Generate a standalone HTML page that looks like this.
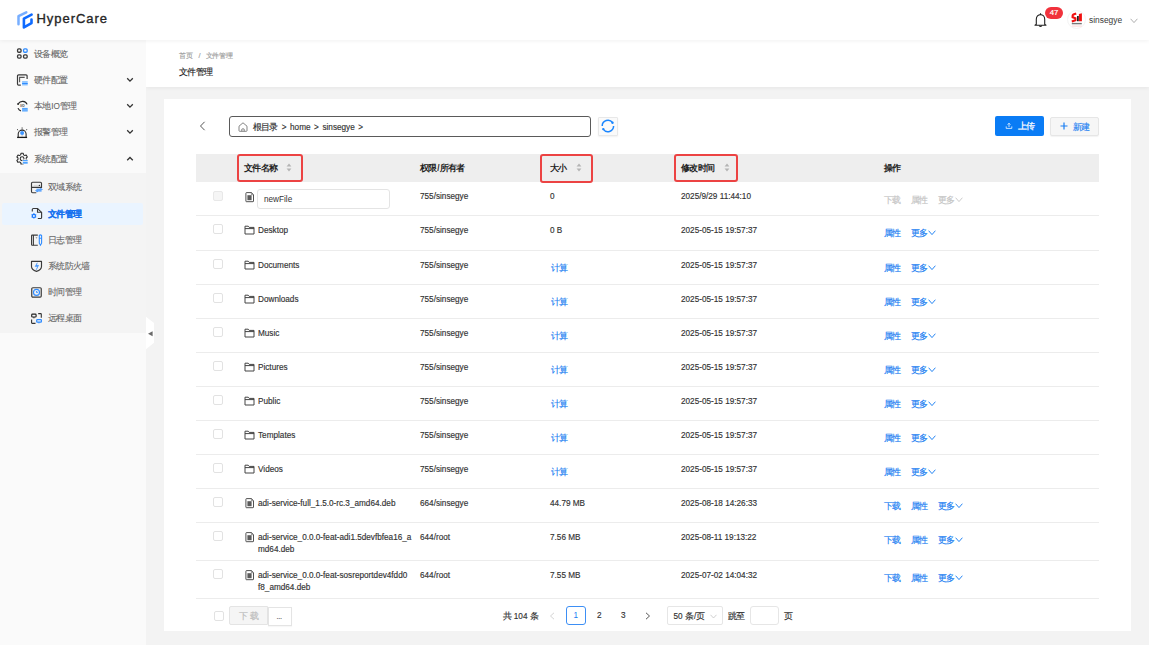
<!DOCTYPE html>
<html><head><meta charset="utf-8">
<style>
*{box-sizing:border-box;margin:0;padding:0}
html,body{width:1149px;height:645px;overflow:hidden;background:#f3f3f3;font-family:"Liberation Sans",sans-serif;color:#333}
.abs{position:absolute}
svg{display:block}
#header{position:absolute;left:0;top:0;width:1149px;height:39.5px;background:#fff;box-shadow:0 1px 4px rgba(0,0,0,.06);z-index:5}
#sidebar{position:absolute;left:0;top:40px;width:146px;height:605px;background:#fafafa;z-index:2}
#sub{position:absolute;left:0;top:133px;width:146px;height:160px;background:#f4f4f4}
#crumb{position:absolute;left:146px;top:40px;width:1003px;height:47px;background:#fff;box-shadow:0 1px 4px rgba(0,0,0,.06)}
#card{position:absolute;left:164px;top:99px;width:967px;height:532px;background:#fff}
.t{position:absolute;white-space:nowrap;font-size:8.2px;line-height:10px;color:#333;-webkit-text-stroke:0.15px currentColor}
.mi{position:absolute;left:0;width:146px;height:24px}
.mi .tx{position:absolute;left:34px;top:7px;font-size:8.2px;line-height:10px;color:#666;white-space:nowrap;-webkit-text-stroke:0.1px currentColor}
.mi .ico{position:absolute;left:14px;top:2px}
.sm .tx{left:48px}
.sm .ico{left:28px}
.chev{position:absolute;left:126px;top:9px}
.row{position:absolute;left:196px;width:903px;border-bottom:1px solid #ececec}
.cb{position:absolute;left:17px;width:10px;height:10px;border:1px solid #e2e2e2;border-radius:2px;background:#fff}
.op{color:#1a7ef2}
.dis{color:#c4c4c4}
.ops span{display:inline-block;margin-right:9.6px}
.ops span:last-child{margin-right:0}
.ops svg{display:inline-block}
.inp{position:absolute;left:61px;top:7px;width:132.5px;height:20px;border:1px solid #e4e4e4;border-radius:3px;background:#fff}
.inp span{position:absolute;left:6px;top:5px;font-size:8.2px;line-height:10px;color:#333}
.th{position:absolute;left:196px;top:154px;width:903px;height:28px;background:#eeeeee}
.th .t{font-weight:bold;top:9px;color:#222;-webkit-text-stroke:0}
.redbox{position:absolute;border:2px solid #ec4343;border-radius:3px}
.sort{position:absolute;top:9px}
.pg{position:absolute;top:606px;height:19px;border:1px solid #e6e6e6;border-radius:2px;background:#fff}
.c{font-style:normal;font-size:8.6px;letter-spacing:-0.7px;margin-right:0.7px}
.c7 .c{font-size:7.2px;letter-spacing:-0.3px;margin-right:0.3px}
</style></head><body>
<div id="header">
  <svg class="abs" style="left:14px;top:8px" width="24" height="24" viewBox="0 0 24 24">
    <path d="M4.5 16.2V8.2L12.3 4.3" fill="none" stroke="#77aeff" stroke-width="2.5" stroke-linejoin="round" stroke-linecap="round"/>
    <path d="M17.6 6.6L9.9 10.6V19.4L17.5 15.1V11.6" fill="none" stroke="#0f6bff" stroke-width="2.6" stroke-linejoin="round" stroke-linecap="round"/>
  </svg>
  <div class="t" style="left:36.5px;top:11px;font-size:13px;line-height:16px;color:#262626;letter-spacing:0.95px;-webkit-text-stroke:0.35px #262626">HyperCare</div>
  <!-- bell -->
  <svg class="abs" style="left:1034px;top:12px" width="13" height="16" viewBox="0 0 13 16">
    <path d="M6.5 1.2V2.3M2.3 12.3V7.2C2.3 4.6 4.1 2.6 6.5 2.6S10.7 4.6 10.7 7.2V12.3L12 13.2H1L2.3 12.3Z" fill="none" stroke="#222" stroke-width="1.1" stroke-linejoin="round"/>
    <path d="M5.2 13.6Q6.5 15.4 7.8 13.6" fill="none" stroke="#222" stroke-width="1.1"/>
  </svg>
  <div class="abs" style="left:1045px;top:6.5px;width:18px;height:12px;border-radius:6px;background:#f1323c;color:#fff;font-size:7.8px;line-height:12px;text-align:center;-webkit-text-stroke:0.2px #fff">47</div>
  <!-- avatar -->
  <div class="abs" style="left:1067px;top:10px;width:19px;height:19px;border-radius:50%;background:#fff;border:1px solid #f4f4f4"></div>
  <svg class="abs" style="left:1064px;top:8px" width="26" height="24" viewBox="0 0 26 24">
    <path d="M12.2 5.4L9.4 6.5Q8.6 6.9 8.6 7.8V9.2L11.4 10.2V12.3L7.8 13.6" fill="none" stroke="#f01010" stroke-width="2.1"/>
    <rect x="13" y="8" width="1.8" height="5.2" fill="#222"/>
    <path d="M14.9 6.1L17.9 5.2V13.2H14.9Z" fill="#f01010"/>
    <rect x="7.8" y="14.9" width="10" height="1.4" fill="#777"/>
    <rect x="7.8" y="17.6" width="10" height="0.9" fill="#fbd0d0"/>
  </svg>
  <div class="t" style="left:1089px;top:15px;font-size:8.4px;color:#3a3a3a;-webkit-text-stroke:0">sinsegye</div>
  <svg class="abs" style="left:1130px;top:18px" width="8" height="6" viewBox="0 0 8 6"><path d="M0.6 0.8L4 4.6L7.4 0.8" fill="none" stroke="#999" stroke-width="0.8"/></svg>
</div>

<div id="sidebar">
  <div id="sub"></div>
  <div class="abs" style="left:2px;top:163px;width:141px;height:22px;background:#eaf4ff;border-radius:2px"></div>
  <div class="mi" style="top:2px">
    <svg class="ico" width="18" height="18" viewBox="0 0 18 18">
      <rect x="3.55" y="4.85" width="3.5" height="3.4" rx="1.1" fill="none" stroke="#3a3a3a" stroke-width="1.3"/>
      <rect x="9.55" y="4.85" width="3.6" height="3.4" rx="1.1" fill="none" stroke="#2f8cff" stroke-width="1.3"/>
      <rect x="3.55" y="10.85" width="3.5" height="3.3" rx="1.1" fill="none" stroke="#3a3a3a" stroke-width="1.3"/>
      <rect x="9.55" y="10.85" width="3.6" height="3.3" rx="1.1" fill="none" stroke="#3a3a3a" stroke-width="1.3"/>
    </svg>
    <span class="tx"><i class="c">设备概览</i></span></div>
  <div class="mi" style="top:28px">
    <svg class="ico" width="18" height="18" viewBox="0 0 18 18">
      <path d="M13.1 8.9V5.9Q13.1 4.8 12 4.8H4.6Q3.5 4.8 3.5 5.9V14.1Q3.5 15.2 4.6 15.2H6.8" fill="none" stroke="#3a3a3a" stroke-width="1.2"/>
      <path d="M5.6 12.3V7.4H10.7" fill="none" stroke="#555" stroke-width="1.1"/>
      <rect x="8.1" y="11" width="5.6" height="4.5" fill="#93c7ff"/><rect x="8.1" y="13" width="5.6" height="1.1" fill="#2f8cff"/>
    </svg>
    <span class="tx"><i class="c">硬件配置</i></span><svg class="chev" width="8" height="6" viewBox="0 0 8 6"><path d="M1.2 1.3L4 4.1L6.8 1.3" fill="none" stroke="#333" stroke-width="1.3"/></svg></div>
  <div class="mi" style="top:54px">
    <svg class="ico" style="top:3px" width="18" height="18" viewBox="0 0 18 18">
      <path d="M4.4 6.6A4.9 4.9 0 0 1 13.1 7.4" fill="none" stroke="#2a2a2a" stroke-width="1.15"/>
      <path d="M4 11.1A4.9 4.9 0 0 0 6.9 13.9" fill="none" stroke="#2a2a2a" stroke-width="1.15"/>
      <circle cx="4.1" cy="7" r="0.95" fill="#222"/>
      <text x="6.2" y="9.9" font-size="3.4" font-weight="bold" font-family="Liberation Sans" fill="#333">I/O</text>
      <rect x="8.1" y="10.9" width="5.6" height="3.6" fill="#4fa3ff"/><rect x="8.1" y="12.7" width="5.6" height="0.6" fill="#a9d2ff"/>
    </svg>
    <span class="tx"><i class="c">本地</i>IO<i class="c">管理</i></span><svg class="chev" width="8" height="6" viewBox="0 0 8 6"><path d="M1.2 1.3L4 4.1L6.8 1.3" fill="none" stroke="#333" stroke-width="1.3"/></svg></div>
  <div class="mi" style="top:80px">
    <svg class="ico" style="top:3px" width="18" height="18" viewBox="0 0 18 18">
      <path d="M8.1 4.2V6.7" stroke="#777" stroke-width="1"/>
      <path d="M3.3 6.1L3.9 7.3M12.9 6.1L12.3 7.3" stroke="#444" stroke-width="0.9"/>
      <path d="M4.2 14.2V11.1A3.95 3.95 0 0 1 12.1 11.1V14.2" fill="none" stroke="#2a2a2a" stroke-width="1.1"/>
      <path d="M3.1 14.4H13.1" stroke="#1a1a1a" stroke-width="1.3"/>
      <circle cx="8.1" cy="10" r="2" fill="#3e95ff"/><path d="M8.1 12V14" stroke="#999" stroke-width="0.6"/>
    </svg>
    <span class="tx"><i class="c">报警管理</i></span><svg class="chev" width="8" height="6" viewBox="0 0 8 6"><path d="M1.2 1.3L4 4.1L6.8 1.3" fill="none" stroke="#333" stroke-width="1.3"/></svg></div>
  <div class="mi" style="top:107px">
    <svg class="ico" style="top:3px" width="18" height="18" viewBox="0 0 18 18">
      <path d="M6.05 5.15 L6.73 4.73 L6.96 3.32 L9.24 3.32 L9.47 4.73 L10.15 5.15 L10.86 5.53 L12.19 5.02 L13.33 7.00 L12.22 7.90 L12.20 8.70 L12.22 9.50 L13.33 10.40 L12.19 12.38 L10.86 11.87 L10.15 12.25 L9.47 12.67 L9.24 14.08 L6.96 14.08 L6.73 12.67 L6.05 12.25 L5.34 11.87 L4.01 12.38 L2.87 10.40 L3.98 9.50 L4.00 8.70 L3.98 7.90 L2.87 7.00 L4.01 5.02 L5.34 5.53Z" fill="none" stroke="#2a2a2a" stroke-width="1.05" stroke-linejoin="round"/>
      <circle cx="8.1" cy="8.7" r="1.9" fill="none" stroke="#2a2a2a" stroke-width="1.05"/>
      <rect x="8.4" y="9.4" width="5.8" height="5" fill="#fafafa"/>
      <rect x="8.9" y="10" width="4.8" height="1.3" fill="#4fa3ff"/><rect x="8.9" y="12" width="4.8" height="1.7" fill="#4fa3ff"/>
    </svg>
    <span class="tx"><i class="c">系统配置</i></span><svg class="chev" width="8" height="6" viewBox="0 0 8 6"><path d="M1.2 4.3L4 1.5L6.8 4.3" fill="none" stroke="#333" stroke-width="1.3"/></svg></div>
  <div class="mi sm" style="top:135px">
    <svg class="ico" style="top:3px" width="18" height="18" viewBox="0 0 18 18">
      <path d="M8.3 14.7H4.6Q3.5 14.7 3.5 13.6V5.3Q3.5 4.2 4.6 4.2H12.4Q13.5 4.2 13.5 5.3V9.35H3.5" fill="none" stroke="#3a3a3a" stroke-width="1.15"/>
      <path d="M5.6 7.4H10.8" stroke="#ccc" stroke-width="0.7"/><circle cx="11.4" cy="7.4" r="0.7" fill="#333"/>
      <path d="M8.4 11.3H13.6L12.4 10.3M13.6 12.9H8.4L9.6 13.9" fill="none" stroke="#2f8cff" stroke-width="1.1"/>
    </svg>
    <span class="tx"><i class="c">双域系统</i></span></div>
  <div class="mi sm" style="top:162px">
    <svg class="ico" style="top:2px" width="18" height="18" viewBox="0 0 18 18">
      <path d="M4.3 7.5V5.6Q4.3 4.5 5.4 4.5H9.6L13.6 8.4V13.4Q13.6 14.5 12.5 14.5H9.8" fill="none" stroke="#3a3a3a" stroke-width="1.15"/>
      <path d="M9.5 4.6V8.2H13.5" fill="none" stroke="#3a3a3a" stroke-width="1.1"/>
      <circle cx="5.9" cy="11.9" r="1.6" fill="none" stroke="#1677ff" stroke-width="1.2"/>
      <path d="M5.9 9.2V9.9M5.9 13.9V14.6M3.6 10.55L4.2 10.9M7.6 12.9L8.2 13.25M3.6 13.25L4.2 12.9M7.6 10.9L8.2 10.55" stroke="#1677ff" stroke-width="1.1"/>
    </svg>
    <span class="tx" style="color:#1570ef;font-weight:bold"><i class="c">文件管理</i></span></div>
  <div class="mi sm" style="top:188px">
    <svg class="ico" style="top:3px" width="18" height="18" viewBox="0 0 18 18">
      <path d="M9.8 4.1H4.2Q3.6 4.1 3.6 4.7V13.6Q3.6 14.2 4.2 14.2H9.8" fill="none" stroke="#3a3a3a" stroke-width="1.15"/>
      <path d="M5.4 4.1V14.2" stroke="#333" stroke-width="1"/><path d="M7.8 6.4L8.5 6.8L9.2 6.4" stroke="#444" stroke-width="0.7" fill="none"/>
      <path d="M11.3 4.5Q12.4 3.4 13.6 4.5V12.2L12.45 14.2L11.3 12.2Z M11.3 7.3H13.6" fill="none" stroke="#2f8cff" stroke-width="1.1"/>
    </svg>
    <span class="tx"><i class="c">日志管理</i></span></div>
  <div class="mi sm" style="top:214px">
    <svg class="ico" style="top:3px" width="18" height="18" viewBox="0 0 18 18">
      <path d="M3.5 4.4H13.5V9.5Q13.5 12.8 8.5 14.4Q3.5 12.8 3.5 9.5Z" fill="none" stroke="#3a3a3a" stroke-width="1.15" stroke-linejoin="round"/>
      <path d="M9.3 5.8L7.1 9.6H9.6L8.2 12.9L10.7 8.3H8.3Z" fill="#2f8cff" stroke="#2f8cff" stroke-width="0.4" stroke-linejoin="round"/>
    </svg>
    <span class="tx"><i class="c">系统防火墙</i></span></div>
  <div class="mi sm" style="top:240px">
    <svg class="ico" style="top:3px" width="18" height="18" viewBox="0 0 18 18">
      <rect x="3.75" y="4.75" width="9.5" height="9.3" rx="1.1" fill="none" stroke="#3a3a3a" stroke-width="1.2"/>
      <circle cx="8.5" cy="9.4" r="3" fill="none" stroke="#2f8cff" stroke-width="1.1"/>
      <path d="M8.4 8V9.6H9.8Z" fill="#2f8cff" stroke="#2f8cff" stroke-width="0.6"/>
    </svg>
    <span class="tx"><i class="c">时间管理</i></span></div>
  <div class="mi sm" style="top:266px">
    <svg class="ico" style="top:3px" width="18" height="18" viewBox="0 0 18 18">
      <rect x="3.7" y="5.1" width="4.4" height="2.9" rx="0.8" fill="none" stroke="#222" stroke-width="1.15"/>
      <path d="M5.9 8.2V9.2" stroke="#222" stroke-width="1.2"/>
      <path d="M10.2 4.6H12.7Q13.3 4.6 13.3 5.2V8.7M3.6 10.5V13.8Q3.6 14.4 4.2 14.4H7.5" fill="none" stroke="#333" stroke-width="1.1"/>
      <rect x="8.7" y="10.6" width="4.7" height="2.5" rx="0.6" fill="none" stroke="#2f8cff" stroke-width="1.2"/>
      <path d="M10.9 13.3V14.3" stroke="#2f8cff" stroke-width="1.3"/>
    </svg>
    <span class="tx"><i class="c">远程桌面</i></span></div>
</div>
<!-- collapse handle -->
<svg class="abs" style="left:146px;top:316px" width="9" height="34" viewBox="0 0 9 34">
  <path d="M0 0.7L8 7V26.8L0 33.3Z" fill="#fff"/>
  <path d="M2 17.8L6.6 15.2V20.3Z" fill="#6a6a6a"/>
</svg>

<div id="crumb">
  <div class="t c7" style="left:33px;top:11px;font-size:7.2px;color:#a0a0a0"><i class="c">首页</i></div><div class="t" style="left:52.5px;top:11px;font-size:7.4px;color:#a0a0a0">/</div><div class="t c7" style="left:59.5px;top:11px;font-size:7.2px;color:#a0a0a0"><i class="c">文件管理</i></div>
  <div class="t" style="left:33px;top:27px;font-size:8.4px;color:#222"><i class="c">文件管理</i></div>
</div>

<div id="card"></div>
<!-- toolbar -->
<svg class="abs" style="left:199px;top:121px" width="7" height="10" viewBox="0 0 7 10"><path d="M5.6 0.8L1.5 5L5.6 9.2" fill="none" stroke="#555" stroke-width="1"/></svg>
<div class="abs" style="left:229px;top:116px;width:362px;height:21px;border:1px solid #5a5a5a;border-radius:3px;background:#fff"></div>
<svg class="abs" style="left:237.5px;top:121.5px" width="10" height="10" viewBox="0 0 10 10"><path d="M1 4.2L5 0.8L9 4.2V8.6Q9 9.3 8.3 9.3H1.7Q1 9.3 1 8.6Z M3.8 9.2V7.2Q5 6.2 6.2 7.2V9.2" fill="none" stroke="#666" stroke-width="0.8"/></svg>
<div class="t" style="left:252.5px;top:122px;font-size:8.2px;color:#333;word-spacing:1.3px"><i class="c">根目录</i> &gt; home &gt; sinsegye &gt;</div>
<div class="abs" style="left:598px;top:117px;width:19.5px;height:19px;border:1px solid #e8e8e8;background:#fafafa;border-radius:1px;box-shadow:0 1px 2px rgba(0,0,0,.06)"></div>
<svg class="abs" style="left:601px;top:119px" width="14" height="14" viewBox="0 0 14 14">
  <path d="M1.2 6.9A5.7 5.7 0 0 1 11.6 3.7" fill="none" stroke="#1a86ff" stroke-width="1.5"/>
  <path d="M12.6 7.1A5.7 5.7 0 0 1 2.2 10.2" fill="none" stroke="#1a86ff" stroke-width="1.5"/>
  <circle cx="11.5" cy="3.7" r="1.2" fill="#1a86ff"/><circle cx="2.3" cy="10.1" r="1.2" fill="#1a86ff"/>
</svg>
<div class="abs" style="left:995px;top:116px;width:49px;height:19.5px;background:#0a7cf5;border-radius:2px"></div>
<svg class="abs" style="left:1005px;top:122px" width="8" height="8" viewBox="0 0 8 8"><path d="M4 5V1.4M2.6 2.6L4 1.2L5.4 2.6M1.2 4.4V6.4H6.8V4.4" fill="none" stroke="#fff" stroke-width="0.75"/></svg>
<div class="t" style="left:1018px;top:121px;font-size:8.4px;color:#fff;-webkit-text-stroke:0.25px #fff"><i class="c">上传</i></div>
<div class="abs" style="left:1050px;top:117px;width:49px;height:19px;background:#f6f6f6;border:1px solid #e6e6e6;border-radius:2px;box-shadow:0 1px 1px rgba(0,0,0,.05)"></div>
<svg class="abs" style="left:1060px;top:122px" width="8" height="8" viewBox="0 0 8 8"><path d="M4 0.5V7.5M0.5 4H7.5" stroke="#1a7ef2" stroke-width="1.2"/></svg>
<div class="t" style="left:1073px;top:121.5px;font-size:8.4px;color:#1a7ef2"><i class="c">新建</i></div>

<!-- table header -->
<div class="th">
  <div class="t" style="left:48px"><i class="c">文件名称</i></div>
  <svg class="sort" style="left:90px" width="6" height="9" viewBox="0 0 6 9"><path d="M3 0.6L5.4 3.6H0.6Z M3 8.4L5.4 5.4H0.6Z" fill="#b4b4b4"/></svg>
  <div class="t" style="left:224px"><i class="c">权限</i>/<i class="c">所有者</i></div>
  <div class="t" style="left:354px"><i class="c">大小</i></div>
  <svg class="sort" style="left:380px" width="6" height="9" viewBox="0 0 6 9"><path d="M3 0.6L5.4 3.6H0.6Z M3 8.4L5.4 5.4H0.6Z" fill="#b4b4b4"/></svg>
  <div class="t" style="left:485px"><i class="c">修改时间</i></div>
  <svg class="sort" style="left:527.5px" width="6" height="9" viewBox="0 0 6 9"><path d="M3 0.6L5.4 3.6H0.6Z M3 8.4L5.4 5.4H0.6Z" fill="#b4b4b4"/></svg>
  <div class="t" style="left:688px"><i class="c">操作</i></div>
</div>
<div class="redbox" style="left:237px;top:154px;width:66px;height:28px"></div>
<div class="redbox" style="left:539.5px;top:153.5px;width:53px;height:29px"></div>
<div class="redbox" style="left:674px;top:153.5px;width:64px;height:28px"></div>

<div class="row" style="top:182px;height:34px">
<div class="cb" style="top:9px;background:#f5f5f5;border-color:#e8e8e8"></div>
<div class="abs" style="left:49px;top:10px"><svg class="ic" width="10" height="11" viewBox="0 0 10 11"><path d="M0.9 1.3Q0.9 0.6 1.6 0.6H6.4L8.5 2.7V9.2Q8.5 9.7 8 9.7H1.4Q0.9 9.7 0.9 9.2Z" fill="none" stroke="#333" stroke-width="0.85"/><path d="M6.4 0.7V2.7H8.4" fill="none" stroke="#555" stroke-width="0.6"/><rect x="2.4" y="3.2" width="4.2" height="5" fill="#5a5a5a"/></svg></div>
<div class="inp"><span>newFile</span></div>
<div class="t" style="left:224px;top:10px">755/sinsegye</div>
<div class="t" style="left:354px;top:10px">0</div>
<div class="t" style="left:485px;top:10px">2025/9/29 11:44:10</div>
<div class="t dis ops" style="left:688px;top:13px"><span><i class="c">下载</i></span><span><i class="c">属性</i></span><span><i class="c">更多</i><svg width="8" height="6" viewBox="0 0 8 6" style="vertical-align:0.5px;margin-left:0px"><path d="M0.6 0.7L4 4.6L7.4 0.7" fill="none" stroke="#c8c8c8" stroke-width="0.95"/></svg></span></div>
</div>
<div class="row" style="top:215px;height:36px">
<div class="cb" style="top:9px"></div>
<div class="abs" style="left:48px;top:9px"><svg class="ic" width="11" height="11" viewBox="0 0 11 11"><path d="M1 2.2h3.2l1 1.2H10v6.6H1z M1 4.6h9" fill="none" stroke="#444" stroke-width="1"/></svg></div>
<div class="t nm" style="left:62px;top:11px">Desktop</div>
<div class="t" style="left:224px;top:11px">755/sinsegye</div>
<div class="t" style="left:354px;top:11px">0 B</div>
<div class="t" style="left:485px;top:11px">2025-05-15 19:57:37</div>
<div class="t op ops" style="left:688px;top:13px"><span><i class="c">属性</i></span><span><i class="c">更多</i><svg width="8" height="6" viewBox="0 0 8 6" style="vertical-align:0.5px;margin-left:0px"><path d="M0.6 0.7L4 4.6L7.4 0.7" fill="none" stroke="#1a7ef2" stroke-width="0.95"/></svg></span></div>
</div>
<div class="row" style="top:250px;height:35px">
<div class="cb" style="top:9px"></div>
<div class="abs" style="left:48px;top:9px"><svg class="ic" width="11" height="11" viewBox="0 0 11 11"><path d="M1 2.2h3.2l1 1.2H10v6.6H1z M1 4.6h9" fill="none" stroke="#444" stroke-width="1"/></svg></div>
<div class="t nm" style="left:62px;top:11px">Documents</div>
<div class="t" style="left:224px;top:11px">755/sinsegye</div>
<div class="t op" style="left:355px;top:13px"><i class="c">计算</i></div>
<div class="t" style="left:485px;top:11px">2025-05-15 19:57:37</div>
<div class="t op ops" style="left:688px;top:13px"><span><i class="c">属性</i></span><span><i class="c">更多</i><svg width="8" height="6" viewBox="0 0 8 6" style="vertical-align:0.5px;margin-left:0px"><path d="M0.6 0.7L4 4.6L7.4 0.7" fill="none" stroke="#1a7ef2" stroke-width="0.95"/></svg></span></div>
</div>
<div class="row" style="top:284px;height:35px">
<div class="cb" style="top:9px"></div>
<div class="abs" style="left:48px;top:9px"><svg class="ic" width="11" height="11" viewBox="0 0 11 11"><path d="M1 2.2h3.2l1 1.2H10v6.6H1z M1 4.6h9" fill="none" stroke="#444" stroke-width="1"/></svg></div>
<div class="t nm" style="left:62px;top:11px">Downloads</div>
<div class="t" style="left:224px;top:11px">755/sinsegye</div>
<div class="t op" style="left:355px;top:13px"><i class="c">计算</i></div>
<div class="t" style="left:485px;top:11px">2025-05-15 19:57:37</div>
<div class="t op ops" style="left:688px;top:13px"><span><i class="c">属性</i></span><span><i class="c">更多</i><svg width="8" height="6" viewBox="0 0 8 6" style="vertical-align:0.5px;margin-left:0px"><path d="M0.6 0.7L4 4.6L7.4 0.7" fill="none" stroke="#1a7ef2" stroke-width="0.95"/></svg></span></div>
</div>
<div class="row" style="top:318px;height:35px">
<div class="cb" style="top:9px"></div>
<div class="abs" style="left:48px;top:9px"><svg class="ic" width="11" height="11" viewBox="0 0 11 11"><path d="M1 2.2h3.2l1 1.2H10v6.6H1z M1 4.6h9" fill="none" stroke="#444" stroke-width="1"/></svg></div>
<div class="t nm" style="left:62px;top:11px">Music</div>
<div class="t" style="left:224px;top:11px">755/sinsegye</div>
<div class="t op" style="left:355px;top:13px"><i class="c">计算</i></div>
<div class="t" style="left:485px;top:11px">2025-05-15 19:57:37</div>
<div class="t op ops" style="left:688px;top:13px"><span><i class="c">属性</i></span><span><i class="c">更多</i><svg width="8" height="6" viewBox="0 0 8 6" style="vertical-align:0.5px;margin-left:0px"><path d="M0.6 0.7L4 4.6L7.4 0.7" fill="none" stroke="#1a7ef2" stroke-width="0.95"/></svg></span></div>
</div>
<div class="row" style="top:352px;height:35px">
<div class="cb" style="top:9px"></div>
<div class="abs" style="left:48px;top:9px"><svg class="ic" width="11" height="11" viewBox="0 0 11 11"><path d="M1 2.2h3.2l1 1.2H10v6.6H1z M1 4.6h9" fill="none" stroke="#444" stroke-width="1"/></svg></div>
<div class="t nm" style="left:62px;top:11px">Pictures</div>
<div class="t" style="left:224px;top:11px">755/sinsegye</div>
<div class="t op" style="left:355px;top:13px"><i class="c">计算</i></div>
<div class="t" style="left:485px;top:11px">2025-05-15 19:57:37</div>
<div class="t op ops" style="left:688px;top:13px"><span><i class="c">属性</i></span><span><i class="c">更多</i><svg width="8" height="6" viewBox="0 0 8 6" style="vertical-align:0.5px;margin-left:0px"><path d="M0.6 0.7L4 4.6L7.4 0.7" fill="none" stroke="#1a7ef2" stroke-width="0.95"/></svg></span></div>
</div>
<div class="row" style="top:386px;height:35px">
<div class="cb" style="top:9px"></div>
<div class="abs" style="left:48px;top:9px"><svg class="ic" width="11" height="11" viewBox="0 0 11 11"><path d="M1 2.2h3.2l1 1.2H10v6.6H1z M1 4.6h9" fill="none" stroke="#444" stroke-width="1"/></svg></div>
<div class="t nm" style="left:62px;top:11px">Public</div>
<div class="t" style="left:224px;top:11px">755/sinsegye</div>
<div class="t op" style="left:355px;top:13px"><i class="c">计算</i></div>
<div class="t" style="left:485px;top:11px">2025-05-15 19:57:37</div>
<div class="t op ops" style="left:688px;top:13px"><span><i class="c">属性</i></span><span><i class="c">更多</i><svg width="8" height="6" viewBox="0 0 8 6" style="vertical-align:0.5px;margin-left:0px"><path d="M0.6 0.7L4 4.6L7.4 0.7" fill="none" stroke="#1a7ef2" stroke-width="0.95"/></svg></span></div>
</div>
<div class="row" style="top:420px;height:35px">
<div class="cb" style="top:9px"></div>
<div class="abs" style="left:48px;top:9px"><svg class="ic" width="11" height="11" viewBox="0 0 11 11"><path d="M1 2.2h3.2l1 1.2H10v6.6H1z M1 4.6h9" fill="none" stroke="#444" stroke-width="1"/></svg></div>
<div class="t nm" style="left:62px;top:11px">Templates</div>
<div class="t" style="left:224px;top:11px">755/sinsegye</div>
<div class="t op" style="left:355px;top:13px"><i class="c">计算</i></div>
<div class="t" style="left:485px;top:11px">2025-05-15 19:57:37</div>
<div class="t op ops" style="left:688px;top:13px"><span><i class="c">属性</i></span><span><i class="c">更多</i><svg width="8" height="6" viewBox="0 0 8 6" style="vertical-align:0.5px;margin-left:0px"><path d="M0.6 0.7L4 4.6L7.4 0.7" fill="none" stroke="#1a7ef2" stroke-width="0.95"/></svg></span></div>
</div>
<div class="row" style="top:454px;height:35px">
<div class="cb" style="top:9px"></div>
<div class="abs" style="left:48px;top:9px"><svg class="ic" width="11" height="11" viewBox="0 0 11 11"><path d="M1 2.2h3.2l1 1.2H10v6.6H1z M1 4.6h9" fill="none" stroke="#444" stroke-width="1"/></svg></div>
<div class="t nm" style="left:62px;top:11px">Videos</div>
<div class="t" style="left:224px;top:11px">755/sinsegye</div>
<div class="t op" style="left:355px;top:13px"><i class="c">计算</i></div>
<div class="t" style="left:485px;top:11px">2025-05-15 19:57:37</div>
<div class="t op ops" style="left:688px;top:13px"><span><i class="c">属性</i></span><span><i class="c">更多</i><svg width="8" height="6" viewBox="0 0 8 6" style="vertical-align:0.5px;margin-left:0px"><path d="M0.6 0.7L4 4.6L7.4 0.7" fill="none" stroke="#1a7ef2" stroke-width="0.95"/></svg></span></div>
</div>
<div class="row" style="top:488px;height:35px">
<div class="cb" style="top:9px"></div>
<div class="abs" style="left:49px;top:10px"><svg class="ic" width="10" height="11" viewBox="0 0 10 11"><path d="M0.9 1.3Q0.9 0.6 1.6 0.6H6.4L8.5 2.7V9.2Q8.5 9.7 8 9.7H1.4Q0.9 9.7 0.9 9.2Z" fill="none" stroke="#333" stroke-width="0.85"/><path d="M6.4 0.7V2.7H8.4" fill="none" stroke="#555" stroke-width="0.6"/><rect x="2.4" y="3.2" width="4.2" height="5" fill="#5a5a5a"/></svg></div>
<div class="t nm" style="left:62px;top:11px">adi-service-full_1.5.0-rc.3_amd64.deb</div>
<div class="t" style="left:224px;top:11px">664/sinsegye</div>
<div class="t" style="left:354px;top:11px">44.79 MB</div>
<div class="t" style="left:485px;top:11px">2025-08-18 14:26:33</div>
<div class="t op ops" style="left:688px;top:13px"><span><i class="c">下载</i></span><span><i class="c">属性</i></span><span><i class="c">更多</i><svg width="8" height="6" viewBox="0 0 8 6" style="vertical-align:0.5px;margin-left:0px"><path d="M0.6 0.7L4 4.6L7.4 0.7" fill="none" stroke="#1a7ef2" stroke-width="0.95"/></svg></span></div>
</div>
<div class="row" style="top:522px;height:39px">
<div class="cb" style="top:9px"></div>
<div class="abs" style="left:49px;top:10px"><svg class="ic" width="10" height="11" viewBox="0 0 10 11"><path d="M0.9 1.3Q0.9 0.6 1.6 0.6H6.4L8.5 2.7V9.2Q8.5 9.7 8 9.7H1.4Q0.9 9.7 0.9 9.2Z" fill="none" stroke="#333" stroke-width="0.85"/><path d="M6.4 0.7V2.7H8.4" fill="none" stroke="#555" stroke-width="0.6"/><rect x="2.4" y="3.2" width="4.2" height="5" fill="#5a5a5a"/></svg></div>
<div class="t nm" style="left:62px;top:10px;line-height:11.5px">adi-service_0.0.0-feat-adi1.5devfbfea16_a<br>md64.deb</div>
<div class="t" style="left:224px;top:11px">644/root</div>
<div class="t" style="left:354px;top:11px">7.56 MB</div>
<div class="t" style="left:485px;top:11px">2025-08-11 19:13:22</div>
<div class="t op ops" style="left:688px;top:13px"><span><i class="c">下载</i></span><span><i class="c">属性</i></span><span><i class="c">更多</i><svg width="8" height="6" viewBox="0 0 8 6" style="vertical-align:0.5px;margin-left:0px"><path d="M0.6 0.7L4 4.6L7.4 0.7" fill="none" stroke="#1a7ef2" stroke-width="0.95"/></svg></span></div>
</div>
<div class="row" style="top:560px;height:39px">
<div class="cb" style="top:9px"></div>
<div class="abs" style="left:49px;top:10px"><svg class="ic" width="10" height="11" viewBox="0 0 10 11"><path d="M0.9 1.3Q0.9 0.6 1.6 0.6H6.4L8.5 2.7V9.2Q8.5 9.7 8 9.7H1.4Q0.9 9.7 0.9 9.2Z" fill="none" stroke="#333" stroke-width="0.85"/><path d="M6.4 0.7V2.7H8.4" fill="none" stroke="#555" stroke-width="0.6"/><rect x="2.4" y="3.2" width="4.2" height="5" fill="#5a5a5a"/></svg></div>
<div class="t nm" style="left:62px;top:10px;line-height:11.5px">adi-service_0.0.0-feat-sosreportdev4fdd0<br>f8_amd64.deb</div>
<div class="t" style="left:224px;top:11px">644/root</div>
<div class="t" style="left:354px;top:11px">7.55 MB</div>
<div class="t" style="left:485px;top:11px">2025-07-02 14:04:32</div>
<div class="t op ops" style="left:688px;top:13px"><span><i class="c">下载</i></span><span><i class="c">属性</i></span><span><i class="c">更多</i><svg width="8" height="6" viewBox="0 0 8 6" style="vertical-align:0.5px;margin-left:0px"><path d="M0.6 0.7L4 4.6L7.4 0.7" fill="none" stroke="#1a7ef2" stroke-width="0.95"/></svg></span></div>
</div>

<!-- footer -->
<div class="abs" style="left:213.5px;top:611px;width:10px;height:10px;border:1px solid #e2e2e2;border-radius:2px;background:#fff"></div>
<div class="abs" style="left:229px;top:606px;width:39px;height:19px;border:1px solid #e4e4e4;background:#f5f5f5;border-radius:2px 0 0 2px"></div>
<div class="t" style="left:238.5px;top:611px;color:#bbb"><i class="c">下</i></div><div class="t" style="left:249.5px;top:611px;color:#bbb"><i class="c">载</i></div>
<div class="abs" style="left:268px;top:607px;width:24px;height:18.5px;border:1px solid #e4e4e4;background:#fff;box-shadow:0 1px 1px rgba(0,0,0,.03)"></div>
<div class="t" style="left:276.5px;top:612px;font-size:7.5px;color:#444;letter-spacing:-0.3px">...</div>
<div class="t" style="left:502.5px;top:610.5px"><i class="c">共</i> 104 <i class="c">条</i></div>
<svg class="abs" style="left:549px;top:612px" width="6" height="8" viewBox="0 0 6 8"><path d="M5 0.8L1.5 4L5 7.2" fill="none" stroke="#c8c8c8" stroke-width="0.8"/></svg>
<div class="pg" style="left:566px;width:19.5px;border-color:#3d8ff5;border-radius:3px"></div>
<div class="t" style="left:573.5px;top:611px;color:#1a7ef2;-webkit-text-stroke:0">1</div>
<div class="t" style="left:597px;top:611px">2</div>
<div class="t" style="left:621px;top:611px">3</div>
<svg class="abs" style="left:645px;top:612px" width="6" height="8" viewBox="0 0 6 8"><path d="M1 0.8L4.5 4L1 7.2" fill="none" stroke="#444" stroke-width="0.9"/></svg>
<div class="pg" style="left:666.5px;width:56px"></div>
<div class="t" style="left:673.5px;top:610.5px">50 <i class="c">条</i>/<i class="c">页</i></div>
<svg class="abs" style="left:709.5px;top:614px" width="7" height="5" viewBox="0 0 7 5"><path d="M0.5 0.8L3.5 4L6.5 0.8" fill="none" stroke="#bbb" stroke-width="0.7"/></svg>
<div class="t" style="left:727.5px;top:610.5px"><i class="c">跳至</i></div>
<div class="pg" style="left:749.5px;width:29.5px;border-radius:3px"></div>
<div class="t" style="left:784px;top:610.5px"><i class="c">页</i></div>
</body></html>
